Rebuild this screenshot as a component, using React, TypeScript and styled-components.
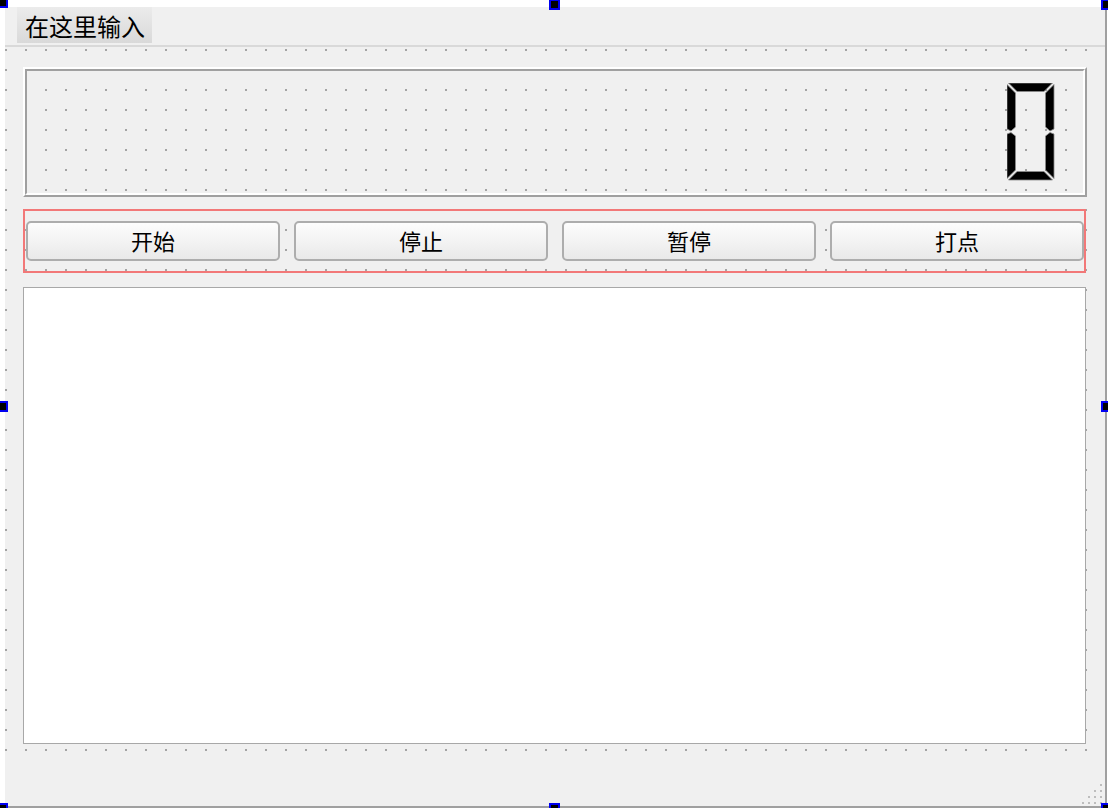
import React from "react";
import styled, { createGlobalStyle } from "styled-components";

const Global = createGlobalStyle`
  html, body {
    margin: 0;
    padding: 0;
    background: #ffffff;
    overflow: hidden;
  }
  * { box-sizing: border-box; }
`;

const Page = styled.div`
  position: relative;
  width: 1108px;
  height: 808px;
  overflow: hidden;
  padding: 7px 0 0 5px;
  background: #ffffff;
  font-family: "Noto Sans CJK SC", "Noto Sans", sans-serif;
`;

const Window = styled.div`
  width: 1102px;
  height: 801px;
  background: #f0f0f0;
  border-right: 2px solid #a0a0a0;
  border-bottom: 2px solid #a0a0a0;
  display: flex;
  flex-direction: column;
`;

const MenuBar = styled.div`
  height: 40px;
  flex: none;
  display: flex;
  align-items: flex-start;
  padding-left: 12px;
  border-bottom: 2px solid #d9d9d9;
`;

const MenuItem = styled.div`
  height: 36px;
  display: flex;
  align-items: center;
  padding: 0 7px 0 8px;
  font-size: 24px;
  color: #000;
  background: linear-gradient(#ebebeb, #d9d9d9);
  white-space: nowrap;
`;

const Central = styled.div`
  height: 713px;
  flex: none;
  display: flex;
  flex-direction: column;
  align-items: flex-start;
  padding: 20px 0 0 18px;
  background-image: conic-gradient(at 2px 2px, transparent 75%, #a4a4a4 0);
  background-size: 20px 20px;
  background-position: 0 2px;
`;

const LcdOuter = styled.div`
  width: 1064px;
  height: 130px;
  border: 2px solid;
  border-color: #ffffff #a0a0a0 #a0a0a0 #ffffff;
  display: flex;
`;

const LcdInner = styled.div`
  flex: 1;
  border: 2px solid;
  border-color: #a0a0a0 #ffffff #ffffff #a0a0a0;
  display: flex;
  justify-content: flex-end;
  align-items: center;
  padding-right: 28px;
`;

const ButtonRow = styled.div`
  margin-top: 12px;
  width: 1063px;
  height: 64px;
  border: 2px solid #f27878;
  display: flex;
  gap: 14px;
  padding: 10px 0 10px 1px;
`;

const PushButton = styled.button`
  flex: 1;
  height: 40px;
  margin: 0;
  padding: 0 0 3px 0;
  border: 2px solid #adadad;
  border-radius: 5px;
  background: linear-gradient(#fdfdfd, #e9e9e9);
  font-family: "Noto Sans CJK SC", "Noto Sans", sans-serif;
  font-size: 22px;
  color: #000;
  line-height: 1;
`;

const TextArea = styled.div`
  margin-top: 14px;
  width: 1063px;
  height: 457px;
  background: #ffffff;
  border: 1px solid #a8a8a8;
`;

const StatusBar = styled.div`
  flex: 1;
  display: flex;
  justify-content: flex-end;
  align-items: flex-end;
  padding: 0 3px 2px 0;
`;

const Handle = styled.div<{ $x: number; $y: number }>`
  position: absolute;
  left: ${(p) => p.$x}px;
  top: ${(p) => p.$y}px;
  width: 11px;
  height: 11px;
  background: #000;
  border: 2px solid #0000f0;
`;

const segs = [
  "1.5,0 45.5,0 37,8.5 10,8.5",
  "47,1.5 47,46 43,48 38.5,44 38.5,10",
  "0,1.5 8.5,10 8.5,44 4,48 0,46",
  "47,51 47,95.5 38.5,87 38.5,53 43,49.5",
  "0,51 4,49.5 8.5,53 8.5,87 0,95.5",
  "10,88.5 37,88.5 45.5,97 1.5,97",
];

const Digit = () => (
  <svg width="48" height="98" viewBox="0 0 48 98">
    {segs.map((p, i) => (
      <polygon key={i} points={p} fill="#000" stroke="#8c8c8c" strokeWidth="0.8" strokeLinejoin="round" />
    ))}
  </svg>
);

const Grip = () => {
  const pts: [number, number][] = [
    [18, 0],
    [12, 6], [18, 6],
    [6, 12], [12, 12], [18, 12],
    [0, 18], [6, 18], [12, 18], [18, 18],
  ];
  return (
    <svg width="20" height="20" viewBox="0 0 20 20">
      {pts.map(([x, y], i) => (
        <rect key={i} x={x} y={y} width="2" height="2" fill="#bdbdbd" />
      ))}
    </svg>
  );
};

const handles: [number, number][] = [
  [-3, -3], [549, -1], [1101, -1],
  [-3, 401], [1101, 401],
  [-3, 803], [549, 803], [1101, 803],
];

export default function App() {
  return (
    <>
      <Global />
      <Page>
        <Window>
          <MenuBar>
            <MenuItem>在这里输入</MenuItem>
          </MenuBar>
          <Central>
            <LcdOuter>
              <LcdInner>
                <Digit />
              </LcdInner>
            </LcdOuter>
            <ButtonRow>
              <PushButton>开始</PushButton>
              <PushButton>停止</PushButton>
              <PushButton>暂停</PushButton>
              <PushButton>打点</PushButton>
            </ButtonRow>
            <TextArea />
          </Central>
          <StatusBar>
            <Grip />
          </StatusBar>
        </Window>
        {handles.map(([x, y], i) => (
          <Handle key={i} $x={x} $y={y} />
        ))}
      </Page>
    </>
  );
}
